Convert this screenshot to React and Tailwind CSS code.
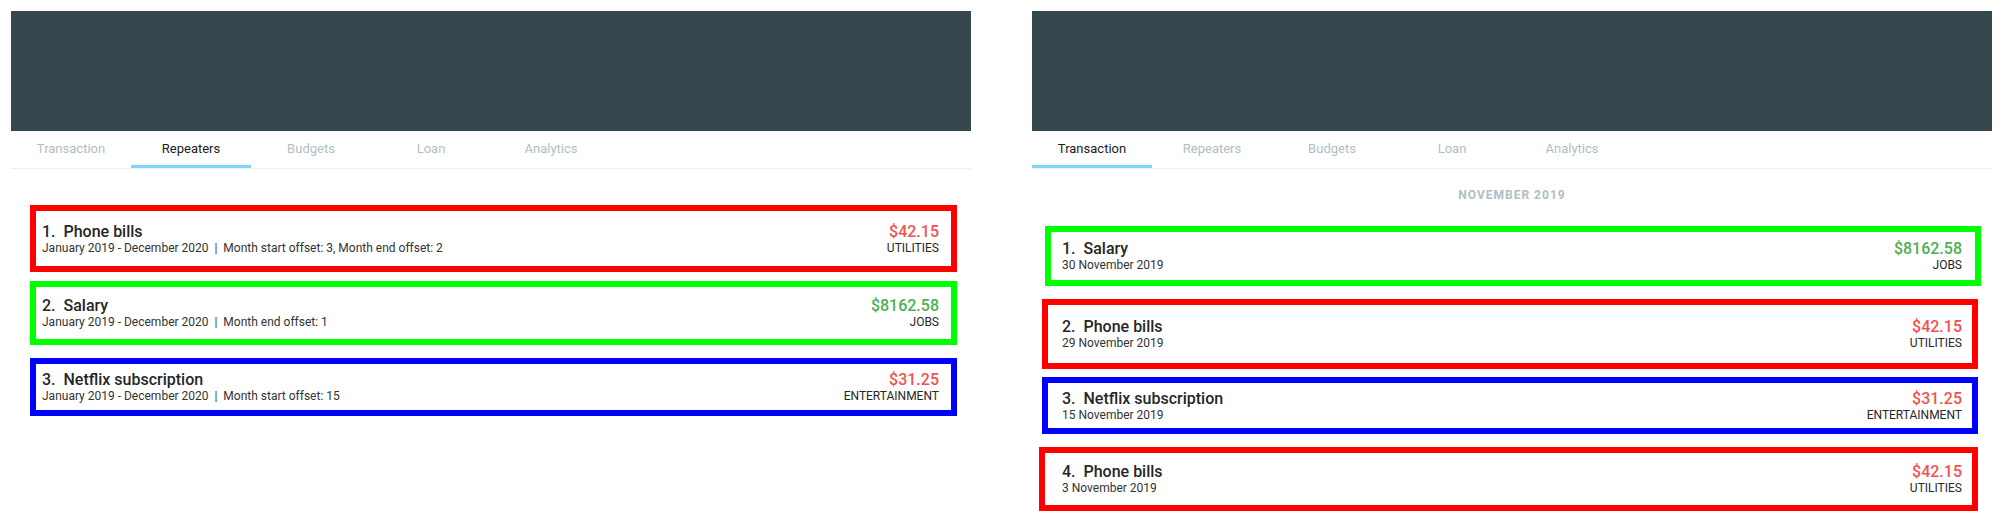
import React from "react";

const font = { fontFamily: "Roboto, 'Liberation Sans', sans-serif" };

function Tabs({ active }) {
  const tabs = ["Transaction", "Repeaters", "Budgets", "Loan", "Analytics"];
  return (
    <div className="flex border-b border-[#eceff1]">
      {tabs.map((t) => (
        <div
          key={t}
          className={
            t === active
              ? "w-[120px] h-[37px] pt-[2px] flex items-center justify-center border-b-[3px] border-[#81d4fa] text-[13px] text-[#212121]"
              : "w-[120px] h-[37px] pt-[2px] flex items-center justify-center border-b-[3px] border-transparent text-[13px] text-[#b0bec5]"
          }
        >
          {t}
        </div>
      ))}
    </div>
  );
}

function CardBody({ title, sub, amount, amountColor, cat }) {
  return (
    <>
      <div className="flex flex-col">
        <div className="text-[16px] leading-[18px] font-medium text-[#262626] whitespace-pre">{title}</div>
        <div className="text-[12px] leading-[14px] text-[#333333] whitespace-pre">{sub}</div>
      </div>
      <div className="flex flex-col items-end">
        <div className={"text-[16px] leading-[18px] font-medium " + amountColor}>{amount}</div>
        <div className="text-[12px] leading-[14px] text-[#262626] uppercase">{cat}</div>
      </div>
    </>
  );
}

export default function App() {
  const red = "text-[#ef5350]";
  const green = "text-[#4caf50]";
  return (
    <div style={font} className="w-[2004px] h-[531px] bg-white flex pt-[11px] pl-[11px] gap-[61px] overflow-hidden">
      {/* Left panel */}
      <div className="w-[960px] flex flex-col">
        <div className="h-[120px] bg-[#37474f]" />
        <Tabs active="Repeaters" />
        <div className="flex flex-col pl-[19px] pr-[14px] pt-[36px]">
          <div className="h-[67px] border-[6px] border-[#ff0000] flex items-center justify-between pl-[6px] pr-[12px]">
            <CardBody
              title={"1.  Phone bills"}
              sub={"January 2019 - December 2020  |  Month start offset: 3, Month end offset: 2"}
              amount="$42.15"
              amountColor={red}
              cat="Utilities"
            />
          </div>
          <div className="mt-[9px] h-[64px] border-[6px] border-[#00ff00] flex items-center justify-between pl-[6px] pr-[12px]">
            <CardBody
              title={"2.  Salary"}
              sub={"January 2019 - December 2020  |  Month end offset: 1"}
              amount="$8162.58"
              amountColor={green}
              cat="Jobs"
            />
          </div>
          <div className="mt-[13px] h-[58px] border-[6px] border-[#0000ff] flex items-center justify-between pl-[6px] pr-[12px]">
            <CardBody
              title={"3.  Netflix subscription"}
              sub={"January 2019 - December 2020  |  Month start offset: 15"}
              amount="$31.25"
              amountColor={red}
              cat="Entertainment"
            />
          </div>
        </div>
      </div>

      {/* Right panel */}
      <div className="w-[960px] flex flex-col">
        <div className="h-[120px] bg-[#37474f]" />
        <Tabs active="Transaction" />
        <div className="pt-[19px] text-center text-[12px] leading-[14px] font-bold tracking-[1px] text-[#b0bec5]">
          NOVEMBER 2019
        </div>
        <div className="flex flex-col mt-[24px]">
          <div className="ml-[13px] mr-[11px] h-[60px] border-[6px] border-[#00ff00] flex items-center justify-between pl-[11px] pr-[13px]">
            <CardBody title={"1.  Salary"} sub="30 November 2019" amount="$8162.58" amountColor={green} cat="Jobs" />
          </div>
          <div className="mt-[13px] ml-[10px] mr-[14px] h-[70px] border-[6px] border-[#ff0000] flex items-center justify-between pl-[14px] pr-[10px]">
            <CardBody title={"2.  Phone bills"} sub="29 November 2019" amount="$42.15" amountColor={red} cat="Utilities" />
          </div>
          <div className="mt-[8px] ml-[10px] mr-[14px] h-[57px] border-[6px] border-[#0000ff] flex items-center justify-between pl-[14px] pr-[10px]">
            <CardBody title={"3.  Netflix subscription"} sub="15 November 2019" amount="$31.25" amountColor={red} cat="Entertainment" />
          </div>
          <div className="mt-[13px] ml-[7px] mr-[14px] h-[64px] border-[6px] border-[#ff0000] flex items-center justify-between pl-[17px] pr-[10px]">
            <CardBody title={"4.  Phone bills"} sub="3 November 2019" amount="$42.15" amountColor={red} cat="Utilities" />
          </div>
        </div>
      </div>
    </div>
  );
}
